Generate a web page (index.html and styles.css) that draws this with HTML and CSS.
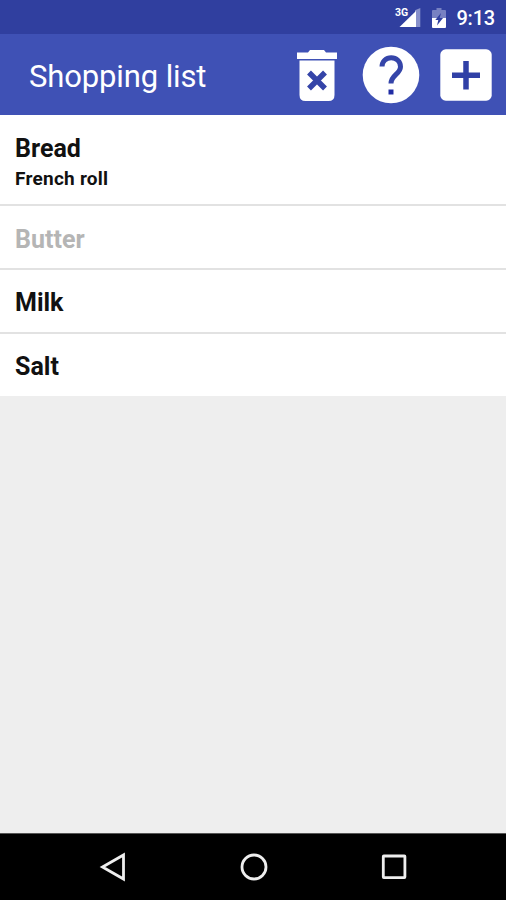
FILE: index.html
```html
<!DOCTYPE html>
<html lang="en">
<head>
<meta charset="utf-8">
<title>Shopping list</title>
<link rel="stylesheet" href="styles.css">
</head>
<body>
<div class="screen">
  <div class="status">
    <svg class="signal" width="27" height="22" viewBox="0 0 27 22" aria-hidden="true">
      <path d="M20 2.300 25.300 0v19H20z" fill="#8790cb"/>
      <path d="M4.500 19 21 3v16z" fill="#fff"/>
      <path d="M0 0h13v9H0z" fill="#303f9f"/>
      <text x="0" y="8.300" class="network">3G</text>
    </svg>
    <svg class="battery" width="14" height="20" viewBox="0 0 14 20" aria-hidden="true">
      <path d="M4.500 0h5v2H13q1 0 1 1v8H0V3q0-1 1-1h3.500z" fill="#7781c2"/>
      <path d="M0 10h14v9q0 1-1 1H1q-1 0-1-1z" fill="#fff"/>
      <path d="M9 5 3.300 12h3L5 17.500 11 10H7.700z" fill="#303f9f"/>
    </svg>
    <span class="clock">9:13</span>
  </div>
  <header class="appbar">
    <h1 class="title">Shopping list</h1>
    <svg class="trash" width="40" height="52" viewBox="0 0 40 52" role="img" aria-label="Delete list">
      <path d="M0 2.500h11L13 0h14l2 2.500h11V9H0zM2.500 10.500h35V45q0 6-6 6H8.500q-6 0-6-6z" fill="#fff"/>
      <path d="m12 22.500 16 16m0-16-16 16" stroke="#3444a8" stroke-width="5.500"/>
    </svg>
    <svg class="help" width="58" height="58" viewBox="0 0 58 58" role="img" aria-label="Help">
      <circle cx="29" cy="29" r="28.300" fill="#fff"/>
      <path d="M20 20.500c0-5 4-8.800 9.200-8.800s9.300 3.800 9.300 9c0 7.300-9.500 8.300-9.500 16.800" fill="none" stroke="#3545a9" stroke-width="5"/>
      <path d="M26.500 43.500h5v5h-5z" fill="#202ca4"/>
    </svg>
    <svg class="add" width="52" height="52" viewBox="0 0 52 52" role="img" aria-label="Add item">
      <rect x=".3" y=".3" width="51.400" height="51.400" rx="5.500" fill="#fff"/>
      <path d="M26 12v28.500M12 26.200h28" stroke="#3040a6" stroke-width="5.500"/>
    </svg>
  </header>
  <ul class="list">
    <li class="item detailed"><span class="name">Bread</span><span class="note">French roll</span></li>
    <li class="item done"><span class="name">Butter</span></li>
    <li class="item"><span class="name">Milk</span></li>
    <li class="item"><span class="name">Salt</span></li>
  </ul>
  <nav class="navbar">
    <svg width="28" height="30" viewBox="0 0 28 30" role="img" aria-label="Back"><path d="M24.500 3v24L3.500 15z"/></svg>
    <svg width="30" height="30" viewBox="0 0 30 30" role="img" aria-label="Home"><circle cx="15" cy="15" r="12"/></svg>
    <svg width="28" height="30" viewBox="0 0 28 30" role="img" aria-label="Recents"><rect x="3.300" y="4" width="21.600" height="21.600" rx=".5"/></svg>
  </nav>
</div>
</body>
</html>
```
FILE: styles.css
```css
* { box-sizing: border-box; }
body { margin: 0; font-family: Roboto, "Liberation Sans", sans-serif; }
.screen { width: 506px; height: 900px; display: flex; flex-direction: column; background: #eee; overflow: hidden; }
.status { height: 34px; flex: none; display: flex; align-items: flex-start; justify-content: flex-end; padding-right: 11px; background: #303f9f; }
.signal { margin: 8px 10px 0 0; overflow: visible; }
.network { font-size: 10.5px; font-weight: 700; fill: #fff; }
.battery { margin: 8px 10px 0 0; }
.clock { color: #fff; font-size: 20px; line-height: 24px; font-weight: 500; margin-top: 6px; letter-spacing: -0.2px; }
.appbar { height: 81px; flex: none; display: flex; align-items: flex-start; padding: 12px 14px 0 29px; background: #3f51b5; }
.title { flex: 1; margin: 13px 0 0; font-size: 31px; line-height: 36px; font-weight: 400; letter-spacing: -0.12px; color: #fff; white-space: nowrap; }
.trash { margin: 4px 25px 0 0; }
.help { margin-right: 20px; }
.add { margin-top: 3px; }
.list { margin: 0; padding: 0; list-style: none; }
.item { height: 64px; display: flex; flex-direction: column; padding: 18px 15px 0; background: #fff; border-bottom: 2px solid #e2e2e2; }
.item:last-child { height: 62px; border-bottom: 0; }
.detailed { height: 91px; padding-top: 19px; }
.done { padding-top: 19px; }
.name { font-size: 25px; line-height: 30px; font-weight: 700; color: #111; }
.note { font-size: 19px; line-height: 24px; font-weight: 700; letter-spacing: 0.25px; color: #111; margin-top: 3px; }
.done .name { color: #b5b5b5; }
.navbar { height: 67px; flex: none; margin-top: auto; padding: 0 98px 0 99px; display: flex; align-items: center; justify-content: space-between; background: #000; border-top: 1px solid #555; }
.navbar svg { fill: none; stroke: #eee; stroke-width: 2.8; }
```
